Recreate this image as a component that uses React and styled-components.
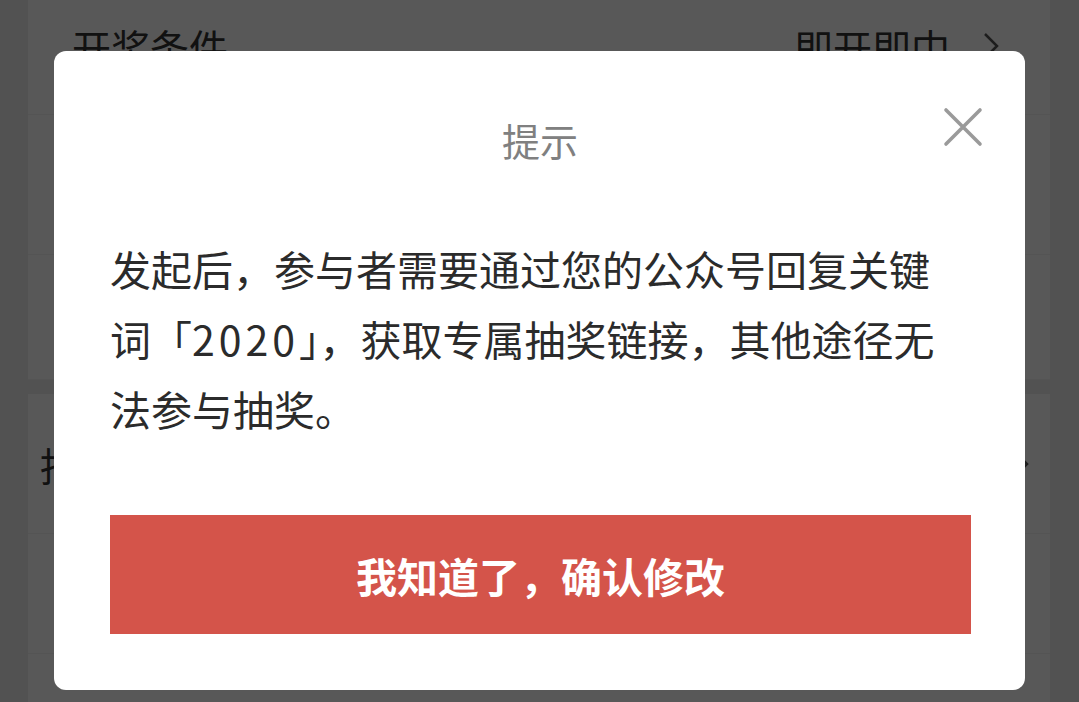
import React from "react";
import styled, { createGlobalStyle } from "styled-components";

const Global = createGlobalStyle`
  html, body { margin: 0; padding: 0; }
  body {
    width: 1079px;
    height: 702px;
    overflow: hidden;
    background: #ececec;
    font-family: "Noto Sans CJK SC", "Noto Sans", sans-serif;
  }
`;

const Page = styled.div`
  width: 1079px;
  height: 702px;
  background: #ececec;
  padding-left: 28px;
  box-sizing: border-box;
  display: flex;
  flex-direction: column;
  gap: 14px;
`;

const Card = styled.div`
  width: ${(p) => p.$w}px;
  background: #fff;
  display: flex;
  flex-direction: column;
  flex: ${(p) => (p.$grow ? 1 : "none")};
`;

const Row = styled.div`
  height: ${(p) => p.$h}px;
  display: flex;
  align-items: ${(p) => p.$align || "center"};
  justify-content: space-between;
  padding: ${(p) => p.$pt || 0}px ${(p) => p.$pr}px 0 ${(p) => p.$pl}px;
  border-bottom: 1px solid #f3f3f3;
  box-sizing: border-box;
  font-size: 39px;
  color: #333;
`;

const RowRight = styled.div`
  display: flex;
  align-items: center;
  gap: 32px;
  color: #333;
`;

const Chevron = styled.svg`
  width: 18px;
  height: 30px;
`;

const Overlay = styled.div`
  position: fixed;
  inset: 0;
  background: rgba(0, 0, 0, 0.655);
  padding: 51px 0 0 54px;
  box-sizing: border-box;
`;

const Modal = styled.div`
  position: relative;
  width: 971px;
  height: 639px;
  background: #fff;
  border-radius: 12px;
  box-sizing: border-box;
  padding: 64px 55px 0 56px;
  display: flex;
  flex-direction: column;
`;

const Title = styled.div`
  text-align: center;
  font-size: 38px;
  line-height: 50px;
  color: #808080;
`;

const Close = styled.button`
  position: absolute;
  top: 56px;
  right: 42px;
  width: 40px;
  height: 40px;
  padding: 0;
  border: none;
  background: none;
  display: flex;
  align-items: center;
  justify-content: center;
`;

const Body = styled.p`
  margin: 68px 0 0;
  font-size: 41px;
  line-height: 70px;
  color: #2b2b2b;
`;

const Digits = styled.span`
  letter-spacing: 4px;
`;

const Confirm = styled.button`
  margin-top: 72px;
  height: 119px;
  width: 861px;
  border: none;
  background: #d4544a;
  color: #fff;
  font-family: "Noto Sans CJK SC", "Noto Sans", sans-serif;
  font-size: 41px;
  font-weight: 700;
  padding: 0;
`;

const ChevronIcon = () => (
  <Chevron viewBox="0 0 18 30">
    <path d="M3 3 L15 15 L3 27" fill="none" stroke="#555" strokeWidth="2.5" />
  </Chevron>
);

export default function App() {
  return (
    <>
      <Global />
      <Page>
        <Card $w={1022}>
          <Row $h={115} $pl={44} $pr={50} $pt={18} $align="flex-start">
            <span>开奖条件</span>
            <RowRight>
              <span>即开即中</span>
              <ChevronIcon />
            </RowRight>
          </Row>
          <Row $h={140} $pl={44} $pr={50} />
          <Row $h={125} $pl={44} $pr={50} />
        </Card>
        <Card $w={1022} $grow>
          <Row $h={140} $pl={12} $pr={20}>
            <span>抽奖方式</span>
            <ChevronIcon />
          </Row>
          <Row $h={120} $pl={12} $pr={20} />
        </Card>
      </Page>
      <Overlay>
        <Modal>
          <Title>提示</Title>
          <Close aria-label="关闭">
            <svg width="40" height="40" viewBox="0 0 40 40">
              <path d="M3 3 L37 37 M37 3 L3 37" stroke="#9a9a9a" strokeWidth="3.6" strokeLinecap="round" />
            </svg>
          </Close>
          <Body>
            发起后，参与者需要通过您的公众号回复关键词「<Digits>2020</Digits>」，获取专属抽奖链接，其他途径无法参与抽奖。
          </Body>
          <Confirm>我知道了，确认修改</Confirm>
        </Modal>
      </Overlay>
    </>
  );
}
